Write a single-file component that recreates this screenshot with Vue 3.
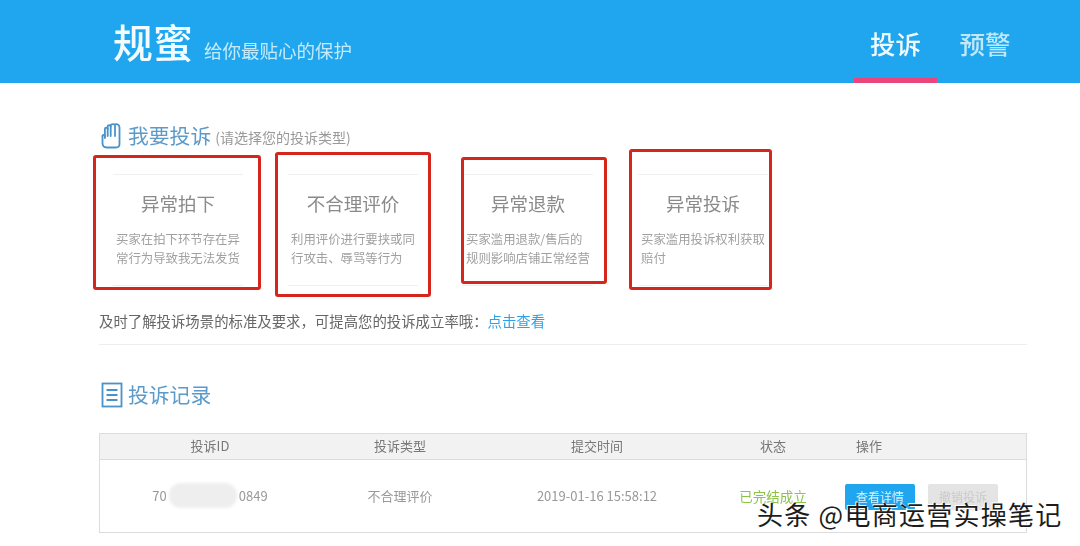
<script setup>
const cards = [
  { title: '异常拍下', lines: ['买家在拍下环节存在异', '常行为导致我无法发货'], mark: 'm1' },
  { title: '不合理评价', lines: ['利用评价进行要挟或同', '行攻击、辱骂等行为'], mark: 'm2' },
  { title: '异常退款', lines: ['买家滥用退款/售后的', '规则影响店铺正常经营'], mark: 'm3' },
  { title: '异常投诉', lines: ['买家滥用投诉权利获取', '赔付'], mark: 'm4' }
]
</script>

<template>
  <div class="page">
    <header class="top">
      <div class="brand">
        <span class="logo">规蜜</span>
        <span class="slogan">给你最贴心的保护</span>
      </div>
      <nav class="nav">
        <a class="tab active">投诉</a>
        <a class="tab second-tab">预警</a>
      </nav>
    </header>

    <main class="main">
      <div class="heading first">
        <svg class="ico" width="20" height="26" viewBox="0 0 20 26" fill="none" stroke="#4a93c8" stroke-width="1.8" stroke-linejoin="round" stroke-linecap="round">
          <path d="M1.5 13c0-1.4 2.4-1.4 2.4 0v2" />
          <path d="M1.5 13v7c0 2.8 1.8 4.5 4.2 4.5h9.3c2.2 0 3.5-1.4 3.5-3.5V4.5c0-2.8-2.2-3.6-4-3.4" />
          <path d="M3.9 14V6c0-1.8 2.8-1.8 2.8 0v7" />
          <path d="M6.7 6V3.5c0-1.8 3-1.8 3 0V13" />
          <path d="M9.7 3.5V2.6c0-1.8 4.3-2.2 4.3 0V13" />
        </svg>
        <span class="h-text">我要投诉</span>
        <span class="hint">(请选择您的投诉类型)</span>
      </div>

      <div class="cards">
        <div v-for="c in cards" :key="c.title" class="card">
          <div class="c-title">{{ c.title }}</div>
          <p class="c-desc"><span v-for="l in c.lines" :key="l">{{ l }}</span></p>
          <i class="mark" :class="c.mark"></i>
        </div>
      </div>

      <p class="tip">及时了解投诉场景的标准及要求&#xFF0C;可提高您的投诉成立率哦&#xFF1A;<a class="link">点击查看</a></p>
      <div class="divider"></div>

      <div class="heading second">
        <svg class="ico" width="22" height="26" viewBox="0 0 22 26" fill="none" stroke="#4a93c8" stroke-width="1.8">
          <rect x="1.5" y="1.5" width="19" height="23" />
          <path d="M5.5 8h11M5.5 13h11M5.5 18h11" />
        </svg>
        <span class="h-text">投诉记录</span>
      </div>

      <div class="table">
        <div class="t-row t-head">
          <span>投诉ID</span>
          <span>投诉类型</span>
          <span>提交时间</span>
          <span class="c-state">状态</span>
          <span class="c-op-h">操作</span>
        </div>
        <div class="t-row t-body">
          <span class="c-id">70<i class="blob"></i>0849</span>
          <span>不合理评价</span>
          <span>2019-01-16 15:58:12</span>
          <span class="c-state ok">已完结成立</span>
          <span class="c-op">
            <button class="btn primary">查看详情</button>
            <button class="btn muted">撤销投诉</button>
          </span>
        </div>
      </div>
    </main>

    <div class="watermark">头条 @电商运营实操笔记</div>
  </div>
</template>

<style scoped>
.page {
  position: relative;
  width: 1080px;
  height: 546px;
  overflow: hidden;
  background: #fff;
  font-family: "Noto Sans CJK SC", "Liberation Sans", sans-serif;
}
.top {
  height: 83px;
  background: #1fa6ee;
  display: flex;
  justify-content: space-between;
  padding-left: 113px;
  padding-right: 47px;
  box-sizing: border-box;
}
.brand {
  display: flex;
  align-items: flex-start;
  gap: 11px;
  padding-top: 12px;
  filter: blur(0.5px);
}
.logo {
  font-size: 40px;
  line-height: 58px;
  color: #f2fcff;
  font-weight: 500;
}
.slogan {
  font-size: 18.5px;
  line-height: 28px;
  margin-top: 24px;
  color: #c4ebfb;
}
.nav {
  display: flex;
}
.tab {
  width: 83px;
  box-sizing: border-box;
  text-align: center;
  font-size: 25.5px;
  line-height: 36px;
  padding-top: 25px;
  color: #bfe8fb;
  filter: blur(0.4px);
  font-weight: 500;
}
.second-tab {
  width: 96px;
}
.tab.active {
  color: #eefaff;
  border-bottom: 5px solid #e8467c;
}
.main {
  padding: 0 53px 0 99px;
  box-sizing: border-box;
}
.heading {
  display: flex;
  align-items: center;
  height: 26px;
  filter: blur(0.45px);
}
.heading.first {
  margin-top: 40px;
}
.heading.second {
  margin-top: 37px;
}
.ico {
  margin-left: 2px;
  flex: none;
}
.heading.first .ico {
  margin-right: 7px;
}
.heading.second .ico {
  margin-right: 5px;
}
.h-text {
  font-size: 20.8px;
  line-height: 26px;
  color: #5c9bc9;
  margin-top: -2px;
}
.hint {
  font-size: 14px;
  color: #999;
  margin-left: 4px;
  margin-top: 1px;
  white-space: nowrap;
}
.cards {
  display: flex;
  gap: 45px;
  margin-top: 25px;
  margin-left: 14px;
}
.card {
  position: relative;
  width: 130px;
  height: 112px;
  flex: none;
  box-sizing: border-box;
  border-top: 1px solid #eef0f3;
  border-bottom: 1px solid #eef0f3;
  text-align: center;
}
.c-title {
  margin-top: 15px;
  font-size: 18.5px;
  line-height: 26px;
  color: #8a8a8a;
  filter: blur(0.45px);
}
.c-desc {
  margin: 14px 0 0 3px;
  width: 130px;
  text-align: left;
  font-size: 12.4px;
  line-height: 18.5px;
  color: #a0a0a0;
  filter: blur(0.55px);
}
.c-desc span {
  display: block;
  white-space: nowrap;
}
.mark {
  position: absolute;
  box-sizing: border-box;
  border: 3px solid #d4261d;
  border-radius: 3px;
}
.m1 { left: -20px; top: -20px; width: 168px; height: 135px; }
.m2 { left: -13px; top: -23px; width: 156px; height: 145px; }
.m3 { left: -2px; top: -18px; width: 146px; height: 127px; }
.m4 { left: -9px; top: -26px; width: 143px; height: 141px; }
.tip {
  margin: 25px 0 0 0;
  font-size: 14.4px;
  line-height: 20px;
  color: #666;
  white-space: nowrap;
  filter: blur(0.45px);
}
.link {
  color: #2ba3e8;
}
.divider {
  height: 1px;
  background: #eeeeee;
  margin-top: 13px;
}
.table {
  margin-top: 25px;
  height: 100px;
  box-sizing: border-box;
  border: 1px solid #dcdcdc;
}
.t-row {
  display: grid;
  grid-template-columns: 220px 160px 234px 131px 1fr;
  text-align: center;
  align-items: center;
  white-space: nowrap;
}
.t-head {
  height: 23px;
  padding-bottom: 2px;
  background: #f2f2f2;
  border-bottom: 1px solid #dcdcdc;
  font-size: 13px;
  color: #777;
}
.t-head span {
  filter: blur(0.45px);
}
.t-body {
  height: 71px;
  padding-bottom: 2px;
  font-size: 13px;
  color: #999;
}
.t-body > span:not(.c-op) {
  filter: blur(0.4px);
}
.c-state {
  padding-right: 13px;
}
.c-op-h {
  text-align: left;
  padding-left: 11px;
}
.c-id {
  display: flex;
  align-items: center;
  justify-content: center;
}
.blob {
  display: block;
  width: 68px;
  height: 25px;
  margin: 0 2px;
  border-radius: 12px;
  background: #eeeeee;
  filter: blur(1.5px);
}
.ok {
  color: #8bc34a;
  font-size: 13.5px;
}
.c-op {
  display: flex;
  gap: 13px;
  padding-top: 2px;
}
.btn {
  width: 70px;
  height: 26px;
  padding: 0;
  border: 0;
  border-radius: 2px;
  font-family: inherit;
  font-size: 12px;
  filter: blur(0.6px);
}
.primary {
  background: #1fa6ee;
  color: #d8f2ff;
}
.muted {
  background: #e4e4e4;
  color: #c9c9c9;
}
.watermark {
  position: absolute;
  left: 757px;
  top: 497px;
  font-size: 26px;
  line-height: 34px;
  letter-spacing: 1.25px;
  white-space: nowrap;
  color: #1c1c1c;
  text-shadow: 1px 1px 0 #fff, -1px -1px 0 #fff;
}
</style>
